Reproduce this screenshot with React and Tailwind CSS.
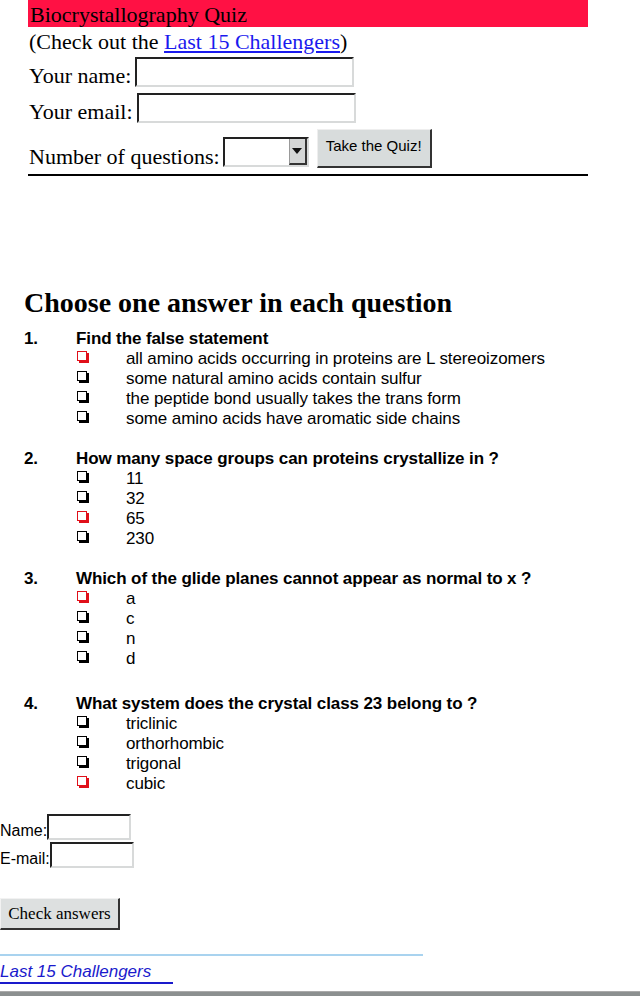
import React from 'react';

const questions = [
  {
    n: '1.',
    title: 'Find the false statement',
    options: [
      ['all amino acids occurring in proteins are L stereoizomers', true],
      ['some natural amino acids contain sulfur', false],
      ['the peptide bond usually takes the trans form', false],
      ['some amino acids have aromatic side chains', false],
    ],
  },
  {
    n: '2.',
    title: 'How many space groups can proteins crystallize in ?',
    options: [
      ['11', false],
      ['32', false],
      ['65', true],
      ['230', false],
    ],
  },
  {
    n: '3.',
    title: 'Which of the glide planes cannot appear as normal to x ?',
    options: [
      ['a', true],
      ['c', false],
      ['n', false],
      ['d', false],
    ],
  },
  {
    n: '4.',
    title: 'What system does the crystal class 23 belong to ?',
    options: [
      ['triclinic', false],
      ['orthorhombic', false],
      ['trigonal', false],
      ['cubic', true],
    ],
  },
];

function Box({ red }) {
  return (
    <span
      className={
        red
          ? 'block w-[10px] h-[10px] border-[1.5px] border-[#e0101a] shadow-[2px_2px_0_#e0101a]'
          : 'block w-[10px] h-[10px] border-[1.5px] border-black shadow-[2px_2px_0_#000]'
      }
    />
  );
}

function TextBox({ w, h }) {
  return (
    <div
      className={`${w} ${h} bg-white border-2 border-t-[#222] border-l-[#222] border-b-[#d8dada] border-r-[#d8dada]`}
    />
  );
}

export default function App() {
  return (
    <div className="bg-white min-h-[996px] w-[640px] flex flex-col text-black font-['Liberation_Serif',serif]">
      {/* top form */}
      <div className="ml-[28px] w-[560px] border-b-2 border-black pb-[6px]">
        <div className="bg-[#ff1144] h-[27px] text-[22px] leading-[30px] pl-[2px]">
          Biocrystallography Quiz
        </div>
        <div className="text-[22px] leading-[30px] h-[30px] pl-[1px]">
          (Check out the{' '}
          <a className="text-[#1a1aee] underline">Last 15 Challengers</a>)
        </div>
        <div className="flex items-end text-[22px] leading-[22px] pl-[1px]">
          <span className="mr-[4px]">Your name:</span>
          <TextBox w="w-[219px]" h="h-[30px]" />
        </div>
        <div className="flex items-end text-[22px] leading-[22px] pl-[1px] mt-[6px]">
          <span className="mr-[4px]">Your email:</span>
          <TextBox w="w-[219px]" h="h-[30px]" />
        </div>
        <div className="flex items-end text-[22px] leading-[22px] pl-[1px] mt-[6px]">
          <span className="mr-[3px]">Number of questions:</span>
          <div className="flex w-[86px] h-[30px] border-2 border-t-[#222] border-l-[#222] border-b-[#d8dada] border-r-[#d8dada] mb-[1px]">
            <div className="flex-1 bg-white" />
            <div className="w-[18px] bg-[#d4d6d6] border-l border-[#999] border-b-2 border-b-[#333] border-r-2 border-r-[#333] flex items-center justify-center">
              <svg width="10" height="6" viewBox="0 0 10 6">
                <path d="M0 0h10L5 6z" fill="#111" />
              </svg>
            </div>
          </div>
          <button className="ml-[8px] w-[115px] h-[39px] bg-[#d8dcdc] border-b-2 border-r-2 border-[#333] border-t border-l border-t-[#eee] border-l-[#eee] font-['Liberation_Sans',sans-serif] text-[15px] leading-[16px] pb-[4px] self-end">
            Take the Quiz!
          </button>
        </div>
      </div>

      {/* questions */}
      <h1 className="ml-[24px] mt-[111px] text-[28px] leading-[32px] font-bold">
        Choose one answer in each question
      </h1>
      <div className="ml-[24px] mt-[10px] font-['Liberation_Sans',sans-serif] text-[17px] leading-[20px] tracking-[-0.1px]">
        {questions.map((q, i) => (
          <div key={q.n} className={i === 3 ? 'flex pt-[5px] mb-[20px]' : 'flex mb-[20px]'}>
            <div className="w-[52px] font-bold">{q.n}</div>
            <div className="flex flex-col">
              <div className="font-bold">{q.title}</div>
              {q.options.map(([t, red]) => (
                <div key={t} className="flex items-start">
                  <div className="w-[50px] pl-[1px] pt-[2px]">
                    <Box red={red} />
                  </div>
                  <span>{t}</span>
                </div>
              ))}
            </div>
          </div>
        ))}
      </div>

      {/* bottom form */}
      <div className="flex flex-col gap-[2px] font-['Liberation_Sans',sans-serif] text-[16px] leading-[18px]">
        <div className="flex items-end">
          <span>Name:</span>
          <TextBox w="w-[84px]" h="h-[26px]" />
        </div>
        <div className="flex items-end">
          <span>E-mail:</span>
          <TextBox w="w-[84px]" h="h-[26px]" />
        </div>
      </div>
      <div className="mt-[30px]">
        <button className="w-[120px] h-[32px] bg-[#dde0e0] border-t border-l border-[#f2f2f2] border-b-2 border-r-2 border-b-[#333] border-r-[#333] text-[17px] leading-[18px] font-['Liberation_Serif',serif]">
          Check answers
        </button>
      </div>
      <div className="mt-[24px] w-[423px] h-[2px] bg-[#a9d3ef]" />
      <div className="mt-[6px] font-['Liberation_Sans',sans-serif] text-[17px] leading-[20px] italic">
        <a className="inline-block w-[173px] text-[#1a1acc] border-b-2 border-[#1a1acc]">
          Last 15 Challengers
        </a>
      </div>
      <div className="mt-auto h-[5px] bg-[#8c9090] border-t border-[#aaa]" />
    </div>
  );
}
